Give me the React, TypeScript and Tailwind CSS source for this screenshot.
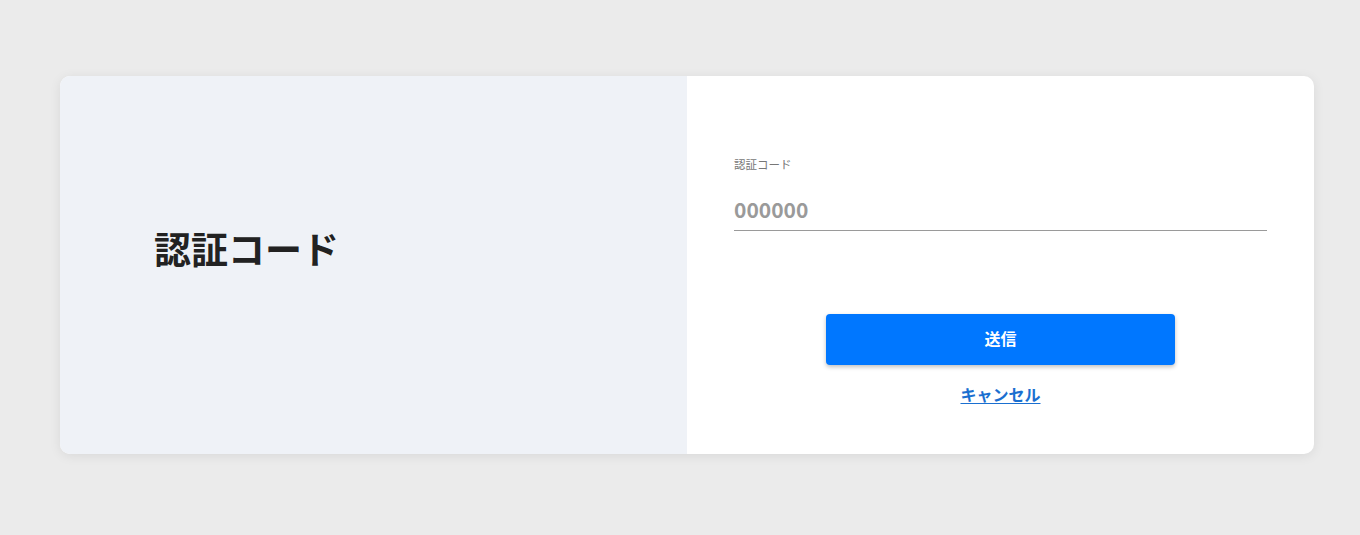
export default function App() {
  return (
    <div className="min-h-[535px] bg-[#ebebeb] pl-[60px] pt-[76px] font-['Noto_Sans_CJK_JP','Noto_Sans',sans-serif]">
      <div className="flex h-[378px] w-[1254px] overflow-hidden rounded-[10px] bg-white shadow-[0_2px_12px_rgba(0,0,0,0.08)]">
        {/* left title panel */}
        <div className="flex w-1/2 items-center bg-[#eff2f7] pb-[34px] pl-[94px]">
          <h1 className="text-[37px] font-bold leading-none text-[#222]">認証コード</h1>
        </div>

        {/* right form panel */}
        <div className="flex w-1/2 flex-col px-[47px] pt-[80px]">
          <label className="text-[11.5px] leading-[16px] text-[#777]">認証コード</label>
          <input
            className="mt-[23px] border-b border-[#9a9a9a] pb-[7px] text-[21px] font-semibold leading-[28px] text-[#555] outline-none placeholder:text-[#9a9a9a]"
            placeholder="000000"
          />
          <div className="mt-[83px] flex flex-col items-center">
            <button className="h-[51px] w-[349px] rounded-[4px] bg-[#0077ff] pb-[3px] text-[16px] font-bold text-white shadow-[0_2px_4px_rgba(0,0,0,0.25)]">
              送信
            </button>
            <a href="#" className="mt-[17px] text-[16px] font-semibold text-[#1a6fd0] underline underline-offset-2">
              キャンセル
            </a>
          </div>
        </div>
      </div>
    </div>
  );
}
